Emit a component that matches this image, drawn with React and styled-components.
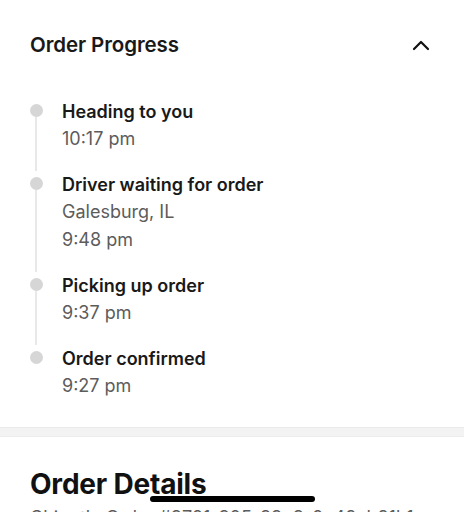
import React from "react";
import styled, { createGlobalStyle } from "styled-components";

const Global = createGlobalStyle`
  html, body { margin: 0; padding: 0; background: #ffffff; }
  body { font-family: "Inter", "Noto Sans", sans-serif; color: #191919; -webkit-font-smoothing: antialiased; }
  #root { width: 464px; height: 512px; overflow: hidden; position: relative; }
`;

const Page = styled.div`
  width: 464px;
  height: 512px;
  overflow: hidden;
  position: relative;
  background: #fff;
`;

const Section = styled.section`
  padding: 30px 34px 27px 29px;
`;

const Header = styled.div`
  display: flex;
  align-items: center;
  justify-content: space-between;
  height: 30px;
  padding-left: 1px;
`;

const Title = styled.h2`
  margin: 0;
  font-size: 20.5px;
  font-weight: 600;
  line-height: 30px;
  letter-spacing: -0.1px;
  color: #191919;
`;

const Toggle = styled.button`
  border: 0;
  background: none;
  padding: 0;
  width: 18px;
  height: 18px;
  display: flex;
  align-items: center;
  justify-content: center;
  cursor: pointer;
`;

const Timeline = styled.ol`
  list-style: none;
  margin: 37.5px 0 0 0;
  padding: 0;
`;

const Step = styled.li`
  display: flex;
  align-items: stretch;
`;

const Rail = styled.div`
  width: 14px;
  display: flex;
  flex-direction: column;
  align-items: center;
  flex-shrink: 0;
`;

const Dot = styled.span`
  width: 13px;
  height: 13px;
  border-radius: 50%;
  background: #d6d6d6;
  margin-top: 6px;
  flex-shrink: 0;
`;

const Line = styled.span`
  flex: 1;
  width: 2px;
  background: ${(p) => (p.$hidden ? "transparent" : "#e8e8e8")};
`;

const Content = styled.div`
  margin-left: 19px;
  padding-bottom: ${(p) => (p.$last ? "0" : "18px")};
  display: flex;
  flex-direction: column;
`;

const StepTitle = styled.div`
  font-size: 18px;
  font-weight: 600;
  line-height: 27px;
  color: #191919;
`;

const StepMeta = styled.div`
  font-size: 18px;
  font-weight: 400;
  line-height: 28px;
  color: #5c5c5c;
`;

const Divider = styled.div`
  height: 8px;
  background: #f3f3f3;
  border-top: 1px solid #e9e9e9;
  border-bottom: 1px solid #ececec;
`;

const Details = styled.section`
  padding: 30px 30px 0 30px;
`;

const DetailsTitle = styled.h1`
  margin: 0;
  font-size: 28px;
  font-weight: 700;
  line-height: 34px;
  letter-spacing: -0.2px;
  color: #111;
`;

const DetailsSub = styled.div`
  margin-top: 5px;
  font-size: 18px;
  line-height: 24px;
  color: #5c5c5c;
  white-space: nowrap;
`;

const HomeIndicator = styled.div`
  position: absolute;
  left: 150px;
  bottom: 10px;
  width: 165px;
  height: 6px;
  border-radius: 3px;
  background: #000;
`;

const steps = [
  { title: "Heading to you", meta: ["10:17 pm"] },
  { title: "Driver waiting for order", meta: ["Galesburg, IL", "9:48 pm"] },
  { title: "Picking up order", meta: ["9:37 pm"] },
  { title: "Order confirmed", meta: ["9:27 pm"] },
];

export default function App() {
  return (
    <Page>
      <Global />
      <Section>
        <Header>
          <Title>Order Progress</Title>
          <Toggle aria-label="Collapse">
            <svg width="18" height="12" viewBox="0 0 18 12" fill="none">
              <path d="M2 10 L9 3 L16 10" stroke="#111" strokeWidth="2.2" strokeLinecap="round" strokeLinejoin="round" />
            </svg>
          </Toggle>
        </Header>
        <Timeline>
          {steps.map((s, i) => {
            const last = i === steps.length - 1;
            return (
              <Step key={s.title}>
                <Rail>
                  <Dot />
                  <Line $hidden={last} />
                </Rail>
                <Content $last={last}>
                  <StepTitle>{s.title}</StepTitle>
                  {s.meta.map((m) => (
                    <StepMeta key={m}>{m}</StepMeta>
                  ))}
                </Content>
              </Step>
            );
          })}
        </Timeline>
      </Section>
      <Divider />
      <Details>
        <DetailsTitle>Order Details</DetailsTitle>
        <DetailsSub>Chipotle Order #3721-305-33e3-0a48ab81b1</DetailsSub>
      </Details>
      <HomeIndicator />
    </Page>
  );
}
